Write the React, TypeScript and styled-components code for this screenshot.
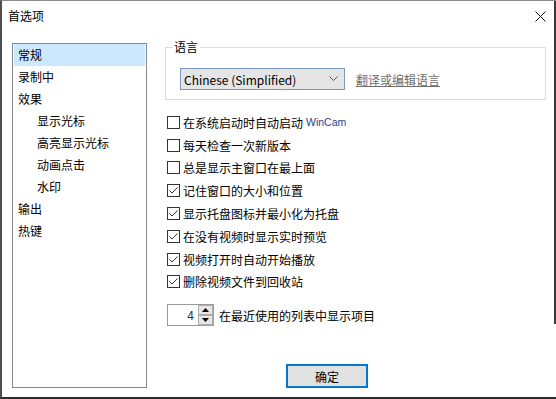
import React from "react";
import styled, { createGlobalStyle } from "styled-components";

const GlobalStyle = createGlobalStyle`
  html, body {
    margin: 0;
    padding: 0;
    background: #fff;
  }
  body {
    font-family: "Noto Sans CJK SC", "Liberation Sans", sans-serif;
    font-size: 12px;
    color: #000;
  }
`;

const Window = styled.div`
  width: 556px;
  height: 399px;
  box-sizing: border-box;
  border-top: 1px solid #8c8c8c;
  border-left: 2px solid #4d4d4d;
  border-bottom: 2px solid #2b2b2b;
  background: linear-gradient(#3a3a3a, #3a3a3a) right top / 2px 323px no-repeat, #fff;
  display: flex;
  flex-direction: column;
`;

const TitleBar = styled.div`
  height: 31px;
  display: flex;
  align-items: center;
  justify-content: space-between;
  padding-left: 6px;
  line-height: 1;
`;

const Title = styled.span`
  font-size: 12px;
  margin-top: -1px;
`;

const CloseBox = styled.div`
  width: 30px;
  height: 30px;
  margin-right: 1px;
  display: flex;
  align-items: center;
  justify-content: center;
`;

const Body = styled.div`
  flex: 1;
  display: flex;
  padding: 11px 0 9px 10px;
  min-height: 0;
`;

const Sidebar = styled.ul`
  list-style: none;
  margin: 0;
  width: 135px;
  box-sizing: border-box;
  border: 1px solid #828790;
  padding: 0 1px;
`;

const NavItem = styled.li<{ $level?: number; $selected?: boolean }>`
  height: 22px;
  line-height: 22px;
  padding-left: ${(p) => (p.$level ? 23 : 4)}px;
  background: ${(p) => (p.$selected ? "#cce8ff" : "transparent")};
  white-space: nowrap;
`;

const Content = styled.div`
  margin-left: 18px;
  width: 381px;
  display: flex;
  flex-direction: column;
  padding-top: 4px;
`;

const GroupBox = styled.div`
  position: relative;
  border: 1px solid #dcdcdc;
  padding: 20px 0 9px 14px;
  display: flex;
  align-items: center;
`;

const Legend = styled.span`
  position: absolute;
  top: -9px;
  left: 6px;
  padding: 0 2px;
  background: #fff;
  line-height: 16px;
`;

const Combo = styled.div`
  width: 165px;
  height: 22px;
  box-sizing: border-box;
  border: 1px solid #7a98bf;
  background: #e5e5e5;
  display: flex;
  align-items: center;
  justify-content: space-between;
  padding: 0 6px 0 3px;
  font-size: 12px;
`;

const LinkText = styled.span`
  margin-left: 11px;
  color: #6d6d6d;
  text-decoration: underline;
`;

const CheckList = styled.div`
  margin-top: 11px;
  display: flex;
  flex-direction: column;
`;

const CheckRow = styled.label`
  height: 22.8px;
  display: flex;
  align-items: center;
  padding-left: 2px;
  white-space: nowrap;
`;

const CheckText = styled.span`
  margin-left: 3px;
`;

const Brand = styled.span`
  margin-left: 3px;
  font-family: "Liberation Sans", sans-serif;
  font-size: 10.5px;
  color: #2c3e8c;
`;

const SpinRow = styled.div`
  margin-top: 11px;
  padding-left: 2px;
  display: flex;
  align-items: center;
`;

const SpinBox = styled.div`
  width: 47px;
  height: 22px;
  box-sizing: border-box;
  border: 1px solid #9a9a9a;
  display: flex;
  align-items: stretch;
`;

const SpinValue = styled.span`
  flex: 1;
  text-align: right;
  padding-right: 4px;
  line-height: 20px;
  color: #1d2f6b;
`;

const SpinButtons = styled.div`
  width: 15px;
  display: flex;
  flex-direction: column;
`;

const SpinButton = styled.div`
  flex: 1;
  box-sizing: border-box;
  border: 1px solid #adadad;
  background: #e6e6e6;
  display: flex;
  align-items: center;
  justify-content: center;
`;

const SpinLabel = styled.span`
  margin-left: 5px;
`;

const Footer = styled.div`
  margin-top: auto;
  padding-left: 121px;
`;

const OkButton = styled.button`
  width: 82px;
  height: 24px;
  box-sizing: border-box;
  border: 2px solid #0078d7;
  background: #e1e1e1;
  font-family: inherit;
  font-size: 12px;
  color: #000;
  padding: 0;
  display: block;
`;

const CheckBox = ({ checked }: { checked: boolean }) => (
  <svg width="13" height="13" viewBox="0 0 13 13">
    <rect x="0.5" y="0.5" width="12" height="12" fill="#fff" stroke="#333" />
    {checked && <path d="M2.5 6.5 L5 9 L10.5 3.5" fill="none" stroke="#333" strokeWidth="1" />}
  </svg>
);

const navItems: { label: string; level: number }[] = [
  { label: "常规", level: 0 },
  { label: "录制中", level: 0 },
  { label: "效果", level: 0 },
  { label: "显示光标", level: 1 },
  { label: "高亮显示光标", level: 1 },
  { label: "动画点击", level: 1 },
  { label: "水印", level: 1 },
  { label: "输出", level: 0 },
  { label: "热键", level: 0 },
];

const options: { label: string; checked: boolean; brand?: string }[] = [
  { label: "在系统启动时自动启动", checked: false, brand: "WinCam" },
  { label: "每天检查一次新版本", checked: false },
  { label: "总是显示主窗口在最上面", checked: false },
  { label: "记住窗口的大小和位置", checked: true },
  { label: "显示托盘图标并最小化为托盘", checked: true },
  { label: "在没有视频时显示实时预览", checked: true },
  { label: "视频打开时自动开始播放", checked: true },
  { label: "删除视频文件到回收站", checked: true },
];

const App = () => {
  return (
    <>
      <GlobalStyle />
      <Window>
        <TitleBar>
          <Title>首选项</Title>
          <CloseBox>
            <svg width="11" height="11" viewBox="0 0 11 11">
              <path d="M0.5 0.5 L10.5 10.5 M10.5 0.5 L0.5 10.5" stroke="#111" strokeWidth="1" />
            </svg>
          </CloseBox>
        </TitleBar>
        <Body>
          <Sidebar>
            {navItems.map((item, i) => (
              <NavItem key={item.label} $level={item.level} $selected={i === 0}>
                {item.label}
              </NavItem>
            ))}
          </Sidebar>
          <Content>
            <GroupBox>
              <Legend>语言</Legend>
              <Combo>
                <span>Chinese (Simplified)</span>
                <svg width="9" height="6" viewBox="0 0 9 6">
                  <path d="M0.5 0.5 L4.5 4.5 L8.5 0.5" fill="none" stroke="#555" />
                </svg>
              </Combo>
              <LinkText>翻译或编辑语言</LinkText>
            </GroupBox>
            <CheckList>
              {options.map((o) => (
                <CheckRow key={o.label}>
                  <CheckBox checked={o.checked} />
                  <CheckText>{o.label}</CheckText>
                  {o.brand && <Brand>{o.brand}</Brand>}
                </CheckRow>
              ))}
            </CheckList>
            <SpinRow>
              <SpinBox>
                <SpinValue>4</SpinValue>
                <SpinButtons>
                  <SpinButton>
                    <svg width="7" height="4" viewBox="0 0 7 4">
                      <path d="M0 4 L3.5 0 L7 4 Z" fill="#000" />
                    </svg>
                  </SpinButton>
                  <SpinButton>
                    <svg width="7" height="4" viewBox="0 0 7 4">
                      <path d="M0 0 L3.5 4 L7 0 Z" fill="#000" />
                    </svg>
                  </SpinButton>
                </SpinButtons>
              </SpinBox>
              <SpinLabel>在最近使用的列表中显示项目</SpinLabel>
            </SpinRow>
            <Footer>
              <OkButton>确定</OkButton>
            </Footer>
          </Content>
        </Body>
      </Window>
    </>
  );
};

export default App;
